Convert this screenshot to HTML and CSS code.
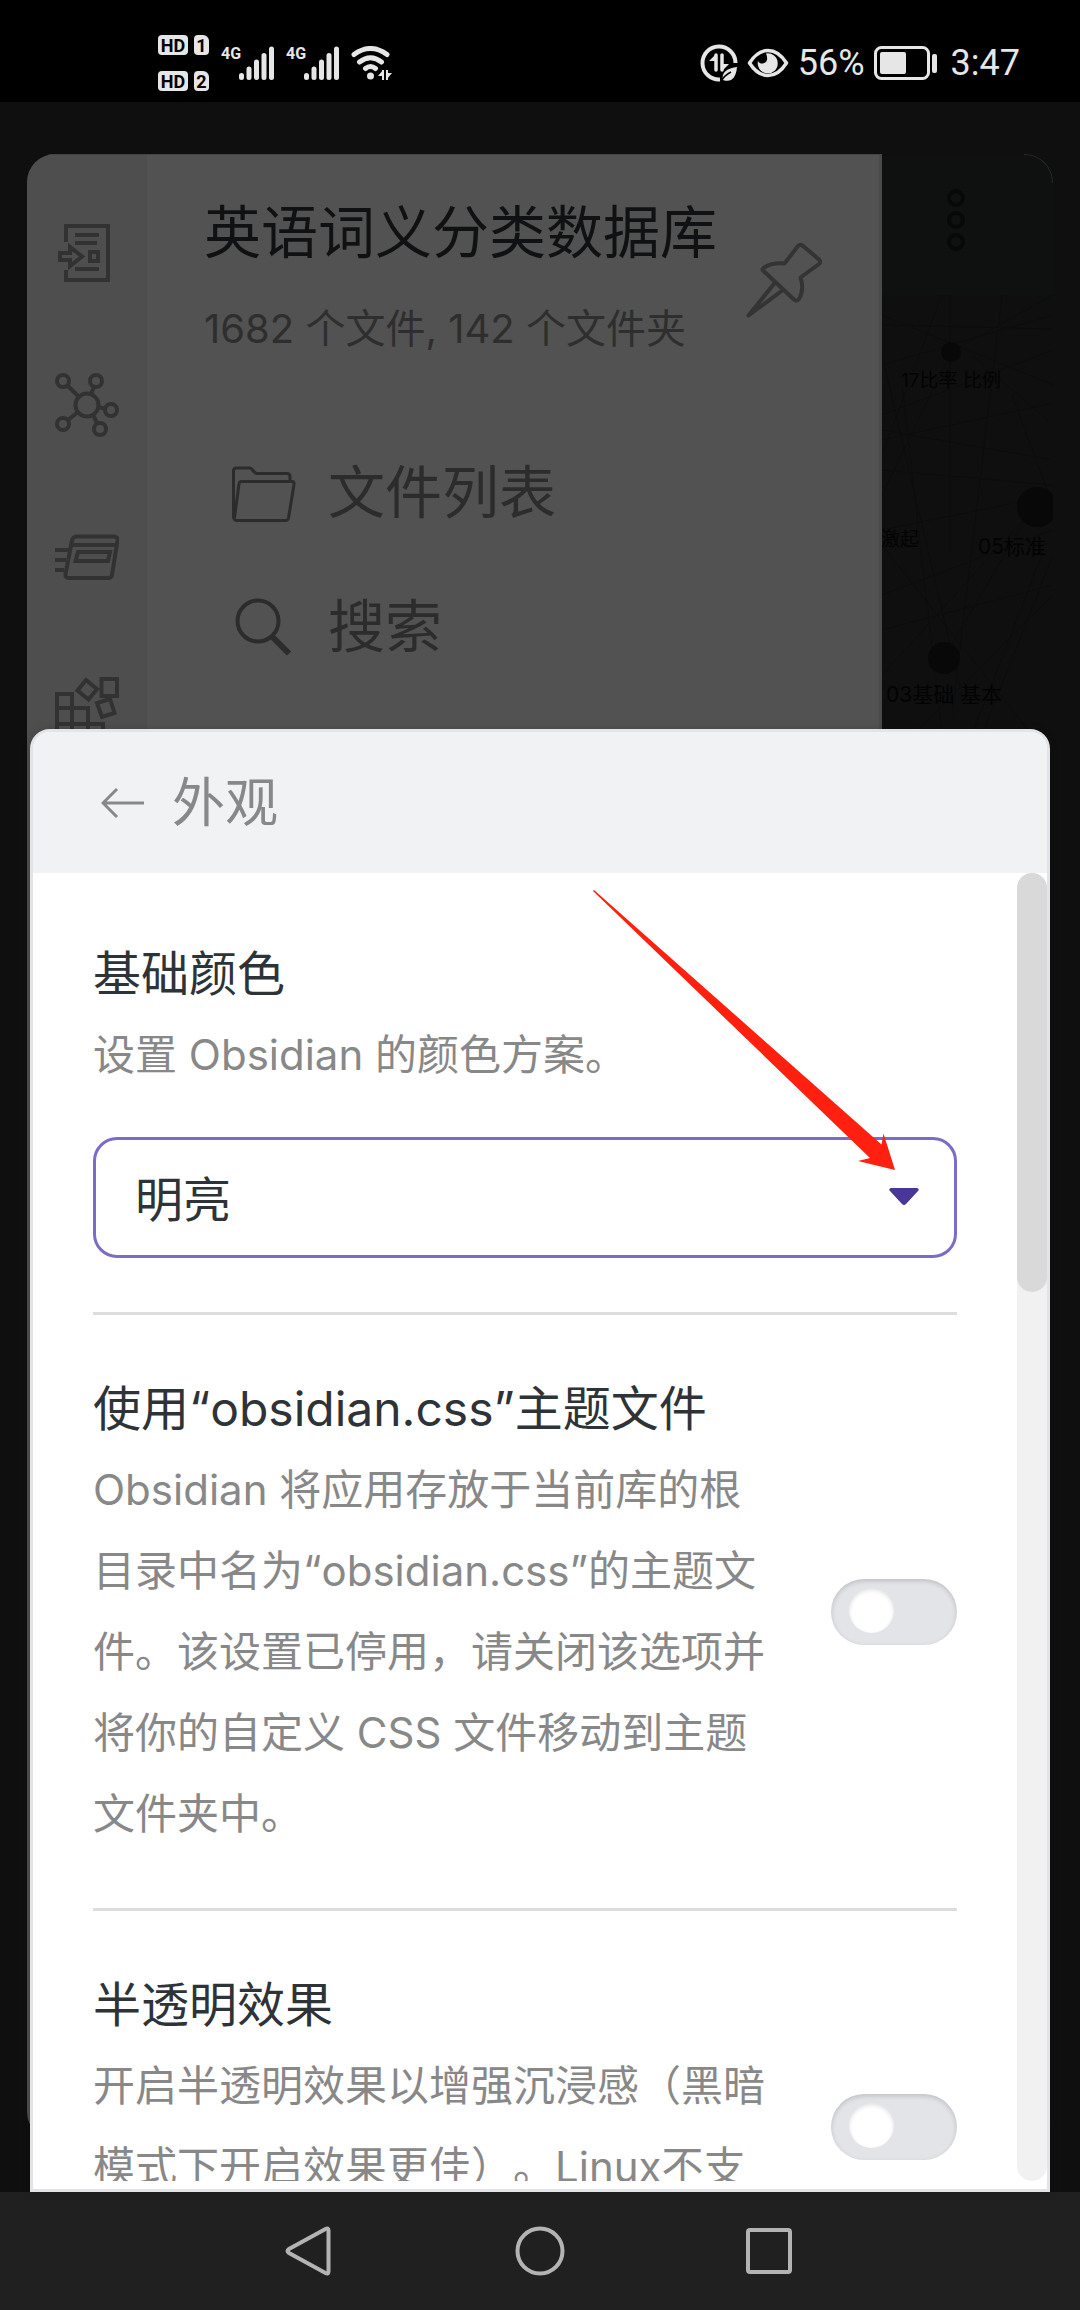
FILE: index.html
```html
<!DOCTYPE html>
<html lang="zh-CN">
<head>
<meta charset="utf-8">
<meta name="viewport" content="width=device-width, initial-scale=1">
<title>外观</title>
<link rel="stylesheet" href="styles.css">
</head>
<body>
<header class="status">
  <div class="status-left">
    <div class="hd-stack">
      <div class="hd-row"><span class="hd">HD</span><span class="sim">1</span></div>
      <div class="hd-row"><span class="hd">HD</span><span class="sim">2</span></div>
    </div>
    <div class="signal">
      <span class="net">4G</span>
      <svg width="36" height="34" viewBox="0 0 36 34"><path d="M2.5 29.500v2M10 23v8.500M17.500 16v15.500M25 9.500v22M32.500 3v28.500" stroke="#e6e6e6" stroke-width="5" stroke-linecap="round"/></svg>
    </div>
    <div class="signal">
      <span class="net">4G</span>
      <svg width="36" height="34" viewBox="0 0 36 34"><path d="M2.5 29.500v2M10 23v8.500M17.500 16v15.500M25 9.500v22M32.500 3v28.500" stroke="#e6e6e6" stroke-width="5" stroke-linecap="round"/></svg>
    </div>
    <svg class="wifi" width="42" height="34" viewBox="0 0 42 34" fill="none" stroke="#e6e6e6" stroke-width="5" stroke-linecap="round"><path d="M3 8.500Q19.500-3.500 36 8.500M8.500 16Q19.500 7.500 30.500 16M14.500 22.500Q19.500 18.500 24.500 22.500"/><circle cx="19.500" cy="30" r="3.500" fill="#e6e6e6" stroke="none"/><path d="M32 24v10M36 24v10" stroke-width="2" stroke-linecap="butt"/><path d="M32 24v6h-5zM36 33v-6h5z" fill="#e6e6e6" stroke="none"/></svg>
  </div>
  <div class="status-right">
    <svg width="38" height="38" viewBox="0 0 38 38" fill="none"><path d="M35.500 19A16.500 16.500 0 1 0 20 35.500" stroke="#e6e6e6" stroke-width="4"/><path d="M16 11v15M22 11v15" stroke="#e6e6e6" stroke-width="3.500" stroke-linecap="round"/><path d="M16 10v7H9zM22 27v-7h7z" fill="#e6e6e6"/><path d="M37 23c-10 1-16 6-14 13 8 3 13-2 14-13z" fill="#e6e6e6"/><path d="M21 38c2-5 6-8 10-10" stroke="#000" stroke-width="1.500"/></svg>
    <svg width="42" height="30" viewBox="0 0 42 30" fill="none"><path d="M2.500 15Q10.500 2.500 21 2.500T39.500 15Q31.500 27.500 21 27.500T2.500 15z" stroke="#e6e6e6" stroke-width="3.500" stroke-linejoin="round"/><path d="M19 5.500a10 10 0 1 1-8 7.500c2 4 8 3 9-1 .5-3-.5-5-1-6.500z" fill="#e6e6e6"/></svg>
    <span class="status-text">56%</span>
    <svg width="64" height="34" viewBox="0 0 64 34"><rect x="1.500" y="1.500" width="53" height="31" rx="6" fill="none" stroke="#e6e6e6" stroke-width="3"/><rect x="6" y="6" width="26" height="22" rx="2" fill="#e6e6e6"/><rect x="58" y="8" width="5" height="19" rx="2" fill="#e6e6e6"/></svg>
    <span class="status-text clock">3:47</span>
  </div>
</header>

<main class="stage">
  <div class="app">
    <nav class="ribbon">
      <svg class="icon" viewBox="0 0 64 64"><path d="M11 21V5h42v54H11V49M20 14h24M20 22h22M20 48h24M35 31h8v9h-8zM5 32h10v-6l12 9.500-12 9.500v-6H5z"/></svg>
      <svg class="icon" viewBox="0 0 64 64"><circle cx="32" cy="32" r="11.500"/><circle cx="8" cy="8" r="6"/><circle cx="41" cy="8" r="6"/><circle cx="56" cy="37" r="6"/><circle cx="45" cy="56" r="6"/><circle cx="8" cy="51" r="6"/><path d="M12.500 12.500L24 24M39 14l-3 7M43 34l7 1.500M38 42l4 8M13 47l10-8"/></svg>
      <svg class="icon" viewBox="0 0 64 64"><path d="M22 11.500h37q4 0 3.500 4L57 50q-.5 3-4 3H14q-4 0-3.500-4L17 15.500q1-4 5-4zM17 20h44M23 27h32l-2 9H20.500zM0 25h14M0 35h11M0 45h9"/></svg>
      <svg class="icon" viewBox="0 0 64 64"><path d="M46.500 2H62v17H46.500zM31 3l11 9-8.500 10.500-11-9zM55 22l4.500 14L47 40l-5-14zM2 62V17h15v45M2 31h31v31M2 47h46v15H2z"/></svg>
    </nav>
    <section class="drawer">
      <div class="vault">
        <div class="vault-text">
          <h2 class="vault-name">英语词义分类数据库</h2>
          <p class="vault-count">1682 个文件, 142 个文件夹</p>
        </div>
        <svg class="pin" width="76" height="76" viewBox="0 0 76 76"><path d="M52 4q2-2 4.500-.5L73 17.500q2.500 2.500 0 4.500L54.500 35.500q4 12-1.500 21.500-2 3-5 .5L17.500 29q-2-1.500 0-3 8-5.500 21-4.500zM29.500 40L2.500 73.500 37 48"/></svg>
      </div>
      <ul class="panes">
        <li class="pane"><svg class="pane-icon" viewBox="0 0 64 64"><path d="M3 59q-1.500-1-1.500-3V10q0-3 3-3h13q2 0 3 2t4 3.500H55q3 0 3 3V20M9 20.500h51q2.500 0 2 3L56.500 57q-.5 2.500-3 2.500H4.500q-2.500 0-2-3L7 23q.5-2.500 2-2.500z"/></svg>文件列表</li>
        <li class="pane"><svg class="pane-icon" viewBox="0 0 64 64"><circle cx="26" cy="26" r="20.500" stroke-width="4"/><path d="M40.500 42L57 58.500" stroke-width="6"/></svg>搜索</li>
      </ul>
    </section>
    <section class="graph">
      <div class="graph-head">
        <svg width="20" height="62" viewBox="0 0 20 62" fill="none" stroke="#080808" stroke-width="4"><circle cx="10" cy="9" r="7"/><circle cx="10" cy="31" r="7"/><circle cx="10" cy="53" r="7"/></svg>
      </div>
      <svg class="canvas">
        <path class="edge" d="M0 30L171 34M0 70L171 20M0 120L171 55M0 145L171 108M0 135L171 165M0 175L171 190M0 235L171 200M0 300L171 235M0 335L171 290M0 60L80 400M20 90L60 440M120 0L70 420M68 0V260M130 100L171 210M0 20L171 90M171 260L100 440M160 260L90 440M155 210L0 380M60 0L0 160M90 60L171 130M0 250L150 440M171 300L30 440M62 363L150 213M69 57L0 200M69 57L171 0"/>
        <g class="node"><circle cx="69" cy="57" r="10"/><circle cx="155" cy="212" r="20"/><circle cx="62" cy="363" r="16"/></g>
        <g class="label">
          <text x="69" y="92">17比率 比例</text>
          <text x="18" y="251">激起</text>
          <text class="big" x="130" y="259">05标准</text>
          <text class="big" x="62" y="407">03基础 基本</text>
        </g>
      </svg>
    </section>
  </div>

  <section class="sheet">
    <header class="sheet-head">
      <button class="back" type="button" aria-label="返回"><svg width="44" height="32" viewBox="0 0 44 32"><path d="M43 16H2M16 2L2 16l14 14"/></svg></button>
      <h1 class="sheet-title">外观</h1>
    </header>
    <div class="sheet-body">
      <div class="settings">
        <div class="setting stacked">
          <div class="info">
            <label class="name" for="base-color">基础颜色</label>
            <p class="desc">设置 Obsidian 的颜色方案。</p>
          </div>
          <div class="dropdown">
            <select id="base-color" class="select"><option>明亮</option></select>
            <svg class="caret" width="30" height="17" viewBox="0 0 30 17"><path d="M2 0h26q3 1 1 3L17 16q-2 2-4 0L1 3q-2-2 1-3z"/></svg>
          </div>
        </div>
        <div class="setting">
          <div class="info">
            <label class="name" for="css-file">使用“obsidian.css”主题文件</label>
            <p class="desc">Obsidian 将应用存放于当前库的根目录中名为“obsidian.css”的主题文件。该设置已停用，请关闭该选项并将你的自定义 CSS 文件移动到主题文件夹中。</p>
          </div>
          <input id="css-file" class="toggle" type="checkbox">
        </div>
        <div class="setting">
          <div class="info">
            <label class="name" for="translucent">半透明效果</label>
            <p class="desc">开启半透明效果以增强沉浸感（黑暗模式下开启效果更佳）。Linux不支持该效果。</p>
          </div>
          <input id="translucent" class="toggle" type="checkbox">
        </div>
      </div>
      <div class="track"><div class="thumb"></div></div>
    </div>
    <svg class="pointer" width="304" height="282" viewBox="0 0 304 282"><path d="M0 1l1-1 287.500 254.500 2-11L302 280l-37-9 12-3z"/></svg>
  </section>
</main>

<nav class="system">
  <button class="key" type="button" aria-label="后退"><svg width="50" height="54" viewBox="0 0 50 54"><path d="M40.500 5q3-1.500 3 1.500v41q0 3-3 1.500L4 29q-3-2 0-4z"/></svg></button>
  <button class="key" type="button" aria-label="主页"><svg width="50" height="54" viewBox="0 0 50 54"><circle cx="25" cy="27" r="22.500"/></svg></button>
  <button class="key" type="button" aria-label="最近任务"><svg width="50" height="54" viewBox="0 0 50 54"><rect x="3" y="6" width="42" height="42" rx="2"/></svg></button>
</nav>
</body>
</html>
```
FILE: styles.css
```css
* { box-sizing: border-box; }

body {
  margin: 0;
  height: 100vh;
  display: flex;
  flex-direction: column;
  background: #0f0f0f;
  font-family: Inter, "Noto Sans CJK SC", sans-serif;
  text-spacing-trim: space-all;
  overflow: hidden;
}

h1, h2, p, ul { margin: 0; padding: 0; font-weight: 400; list-style: none; }
svg { display: block; flex: none; }
button { border: 0; padding: 0; background: none; }

/* Phone status bar */
.status {
  flex: none;
  height: 102px;
  padding: 24px 60px 0 158px;
  display: flex;
  justify-content: space-between;
  align-items: center;
  background: #000;
  color: #e6e6e6;
}
.status-left, .status-right { display: flex; align-items: center; }
.hd-stack { display: flex; flex-direction: column; gap: 16px; margin-right: 12px; }
.hd-row { display: flex; gap: 6px; }
.hd, .sim {
  height: 20px;
  border-radius: 4px;
  background: #e6e6e6;
  color: #000;
  font: 700 18px/21px "Liberation Sans Narrow", Roboto, sans-serif;
  text-align: center;
}
.hd { width: 30px; }
.sim { width: 15px; border-top-right-radius: 6px; }
.signal { display: flex; align-items: flex-start; margin-right: 11px; }
.net { width: 18px; font: 700 16px/16px "Liberation Sans Narrow", Roboto, sans-serif; }
.status-right { gap: 9px; }
.status-text { font: 400 36px/40px Roboto, sans-serif; }
.clock { margin-left: 4px; }

/* Dimmed app behind the sheet */
.stage { flex: 1; min-height: 0; position: relative; padding: 52px 27px; }
.app {
  height: 100%;
  display: flex;
  position: relative;
  overflow: hidden;
  border-radius: 28px;
}
.app::after {
  content: "";
  position: absolute;
  top: 0;
  right: 0;
  width: 28px;
  height: 28px;
  border: solid #2a2a2a;
  border-width: 1px 1px 0 0;
  border-radius: 0 28px 0 0;
}
.ribbon {
  flex: none;
  width: 120px;
  padding-top: 66px;
  display: flex;
  flex-direction: column;
  align-items: center;
  gap: 88px;
  background: #4e4e4e;
  border-top: 1px solid #444;
}
.icon { width: 64px; height: 64px; fill: none; stroke: #323232; stroke-width: 4; }
.drawer {
  flex: 1;
  background: #525252;
  border-top: 1px solid #444;
  border-right: 3px solid #4a4a4a;
}
.vault { display: flex; justify-content: space-between; align-items: flex-end; padding: 38px 57px 0; }
.vault-name { font-size: 57px; line-height: 80px; color: #0f1112; white-space: nowrap; }
.vault-count { margin-top: 26px; font-size: 40px; line-height: 60px; color: #2e2e2e; white-space: nowrap; }
.pin { margin-bottom: 41px; fill: none; stroke: #343434; stroke-width: 4; stroke-linejoin: round; }
.panes { padding: 94px 0 0 85px; display: flex; flex-direction: column; gap: 54px; }
.pane { display: flex; align-items: center; gap: 32px; font-size: 57px; line-height: 80px; color: #2c2c2c; }
.pane-icon { width: 64px; height: 64px; fill: none; stroke: #2c2c2c; stroke-width: 3; }
.graph { flex: none; width: 171px; display: flex; flex-direction: column; }
.graph-head {
  flex: none;
  height: 141px;
  padding: 35px 87px 0 0;
  display: flex;
  justify-content: flex-end;
  align-items: flex-start;
  background: #0f1110;
}
.canvas { flex: 1; width: 100%; background: #0f0f0f; }
.edge { fill: none; stroke: #0d0d0d; stroke-width: 1; }
.node { fill: #080808; }
.label { fill: #030303; font-size: 19px; text-anchor: middle; }
.big { font-size: 21px; }

/* Settings sheet */
.sheet {
  position: absolute;
  left: 30px;
  right: 30px;
  bottom: 0;
  height: 70%;
  display: flex;
  flex-direction: column;
  padding-bottom: 8px;
  background: #fff;
  border: 3px solid #e3e4e8;
  border-radius: 20px 20px 0 0;
  box-shadow: 0 0 8px rgba(0, 0, 0, 0.15);
}
.sheet-head {
  flex: none;
  height: 141px;
  padding-left: 68px;
  display: flex;
  align-items: center;
  gap: 27px;
  background: #f1f2f4;
  border-radius: 17px 17px 0 0;
}
.back svg { fill: none; stroke: #888; stroke-width: 3; }
.sheet-title { font-size: 53px; line-height: 80px; color: #888; }
.sheet-body { flex: 1; min-height: 0; display: flex; }
.settings { flex: 1; padding: 7px 60px 0; overflow: hidden; }
.setting {
  display: flex;
  align-items: center;
  gap: 54px;
  padding: 54px 0;
  border-top: 3px solid #ddd;
}
.setting:first-child { border-top: 0; }
.stacked { flex-direction: column; align-items: stretch; gap: 42px; }
.info { flex: 1; }
.name { display: block; font-size: 48px; line-height: 80px; color: #2e3338; }
.desc { font-size: 42px; line-height: 81px; color: #888; }
.dropdown { position: relative; }
.select {
  display: block;
  width: 100%;
  height: 121px;
  padding: 4px 39px 0;
  appearance: none;
  background: #fff;
  border: 3px solid #7b6cc8;
  border-radius: 24px;
  font: inherit;
  font-size: 48px;
  color: #2e3338;
}
.caret { position: absolute; right: 38px; top: 51px; fill: #483699; pointer-events: none; }
.toggle {
  flex: none;
  appearance: none;
  width: 126px;
  height: 66px;
  margin: 0;
  padding: 9px 18px;
  border-radius: 33px;
  background: #e3e4e8;
  box-shadow: inset 0 2px 5px rgba(0, 0, 0, 0.16);
}
.toggle::before {
  content: "";
  display: block;
  width: 45px;
  height: 45px;
  border-radius: 50%;
  background: #fff;
  box-shadow: inset 0 2px 4px rgba(0, 0, 0, 0.12);
}
.track { flex: none; width: 30px; background: #f1f1f1; border-radius: 15px; }
.thumb { height: 32%; background: #d9d9d9; border-radius: 15px; }
.pointer { position: absolute; right: 150px; top: 158px; fill: #ff2010; pointer-events: none; }

/* System navigation */
.system {
  flex: none;
  height: 118px;
  display: flex;
  justify-content: center;
  align-items: center;
  gap: 180px;
  background: #202020;
}
.key svg { fill: none; stroke: #b3b3b3; stroke-width: 4; }
```
